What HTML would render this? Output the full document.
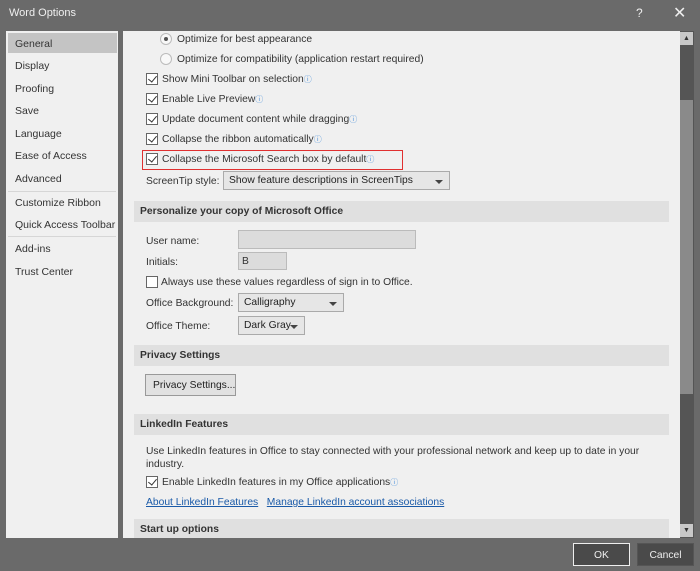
<!DOCTYPE html>
<html><head><style>
*{margin:0;padding:0;box-sizing:border-box}
body{width:700px;height:571px;background:#6a6a6a;font-family:"Liberation Sans",sans-serif;font-size:10.3px;color:#333;position:relative;overflow:hidden}
.a{position:absolute;white-space:nowrap}
.side{left:6px;top:31px;width:112px;height:507px;background:#f0f0f0}
.nav{left:15px;color:#333;font-size:10.5px}
.sel{left:8px;top:33px;width:109px;height:20px;background:#c4c4c4}
.sep{height:1px;background:#d6d6d6;left:8px;width:108px}
.panel{left:123px;top:31px;width:557px;height:507px;background:#f0f0f0;overflow:hidden}
.cb{width:12px;height:12px;border:1px solid #666;background:#fff;display:inline-block;position:absolute}
.cb.c::after{content:"";position:absolute;left:3px;top:0px;width:4px;height:7px;border:solid #333;border-width:0 1.5px 1.5px 0;transform:rotate(40deg)}
.rd{width:12px;height:12px;border:1px solid #bbb;border-radius:50%;background:#f8f8f8;position:absolute}
.hd{left:134px;width:535px;height:21px;background:#e0e0e0;font-weight:bold;padding:5px 0 0 6px}
.i{color:#4a90d9;font-size:8px;vertical-align:top}
.box{background:#dcdcdc;border:1px solid #bbb;position:absolute}
.dd{background:#e6e6e6;border:1px solid #aaa;position:absolute;padding:3px 0 0 5px;color:#222}
.dd::after{content:"";position:absolute;right:6px;top:8px;border:4px solid transparent;border-top:4px solid #444;border-bottom:0}
a{color:#1a5aa8;text-decoration:underline}
.btn{position:absolute;height:23px;text-align:center;color:#eee;padding-top:6px;background:#4a4a4a}
</style></head><body>
<div class="a" style="left:9px;top:7px;color:#f0f0f0;font-size:11px">Word Options</div>
<div class="a" style="left:636px;top:6px;color:#eee;font-size:12px">?</div>
<div class="a" style="left:673px;top:3px;color:#eee;font-size:16px">✕</div>

<div class="a side"></div>
<div class="a sel"></div>
<div class="a nav" style="top:38px">General</div>
<div class="a nav" style="top:60px">Display</div>
<div class="a nav" style="top:83px">Proofing</div>
<div class="a nav" style="top:105px">Save</div>
<div class="a nav" style="top:128px">Language</div>
<div class="a nav" style="top:150px">Ease of Access</div>
<div class="a nav" style="top:173px">Advanced</div>
<div class="a sep" style="top:191px"></div>
<div class="a nav" style="top:197px">Customize Ribbon</div>
<div class="a nav" style="top:219px">Quick Access Toolbar</div>
<div class="a sep" style="top:236px"></div>
<div class="a nav" style="top:243px">Add-ins</div>
<div class="a nav" style="top:266px">Trust Center</div>

<div class="a panel"></div>
<div class="rd" style="left:160px;top:33px"><div style="position:absolute;left:3px;top:3px;width:4px;height:4px;border-radius:50%;background:#555"></div></div>
<div class="a" style="left:177px;top:34px">Optimize for best appearance</div>
<div class="rd" style="left:160px;top:53px"></div>
<div class="a" style="left:177px;top:54px">Optimize for compatibility (application restart required)</div>
<div class="cb c" style="left:146px;top:73px"></div><div class="a" style="left:162px;top:74px">Show Mini Toolbar on selection<span class="i">ⓘ</span></div>
<div class="cb c" style="left:146px;top:93px"></div><div class="a" style="left:162px;top:94px">Enable Live Preview<span class="i">ⓘ</span></div>
<div class="cb c" style="left:146px;top:113px"></div><div class="a" style="left:162px;top:114px">Update document content while dragging<span class="i">ⓘ</span></div>
<div class="cb c" style="left:146px;top:133px"></div><div class="a" style="left:162px;top:134px">Collapse the ribbon automatically<span class="i">ⓘ</span></div>
<div class="a" style="left:142px;top:150px;width:261px;height:20px;border:1.5px solid #e03030"></div>
<div class="cb c" style="left:146px;top:153px"></div><div class="a" style="left:162px;top:154px">Collapse the Microsoft Search box by default<span class="i">ⓘ</span></div>
<div class="a" style="left:146px;top:176px">ScreenTip style:</div>
<div class="dd" style="left:223px;top:171px;width:227px;height:19px">Show feature descriptions in ScreenTips</div>

<div class="a hd" style="top:201px">Personalize your copy of Microsoft Office</div>
<div class="a" style="left:146px;top:236px">User name:</div>
<div class="box" style="left:238px;top:230px;width:178px;height:19px"></div>
<div class="a" style="left:146px;top:257px">Initials:</div>
<div class="box" style="left:238px;top:252px;width:49px;height:18px;padding:3px 0 0 3px;color:#333">B</div>
<div class="cb" style="left:146px;top:276px"></div><div class="a" style="left:161px;top:277px">Always use these values regardless of sign in to Office.</div>
<div class="a" style="left:146px;top:298px">Office Background:</div>
<div class="dd" style="left:238px;top:293px;width:106px;height:19px">Calligraphy</div>
<div class="a" style="left:146px;top:321px">Office Theme:</div>
<div class="dd" style="left:238px;top:316px;width:67px;height:19px">Dark Gray</div>

<div class="a hd" style="top:345px">Privacy Settings</div>
<div class="a" style="left:145px;top:374px;width:91px;height:22px;background:#e1e1e1;border:1px solid #999;padding:5px 0 0 7px;color:#222">Privacy Settings...</div>

<div class="a hd" style="top:414px">LinkedIn Features</div>
<div class="a" style="left:146px;top:446px">Use LinkedIn features in Office to stay connected with your professional network and keep up to date in your</div>
<div class="a" style="left:146px;top:459px">industry.</div>
<div class="cb c" style="left:146px;top:476px"></div><div class="a" style="left:162px;top:477px">Enable LinkedIn features in my Office applications<span class="i">ⓘ</span></div>
<div class="a" style="left:146px;top:497px"><a>About LinkedIn Features</a>&nbsp;&nbsp;&nbsp;<a>Manage LinkedIn account associations</a></div>
<div class="a hd" style="top:519px;height:19px">Start up options</div>

<div class="a" style="left:680px;top:31px;width:14px;height:507px;background:#555"></div>
<div class="a" style="left:680px;top:32px;width:13px;height:13px;background:#c8c8c8;text-align:center;font-size:7px;color:#333;line-height:13px">▲</div>
<div class="a" style="left:680px;top:100px;width:13px;height:294px;background:#8a8a8a"></div>
<div class="a" style="left:680px;top:524px;width:13px;height:13px;background:#c8c8c8;text-align:center;font-size:7px;color:#333;line-height:13px">▼</div>

<div class="btn" style="left:573px;top:543px;width:57px;border:1.5px solid #eee">OK</div>
<div class="btn" style="left:637px;top:543px;width:57px;border:1px solid #555">Cancel</div>
</body></html>
